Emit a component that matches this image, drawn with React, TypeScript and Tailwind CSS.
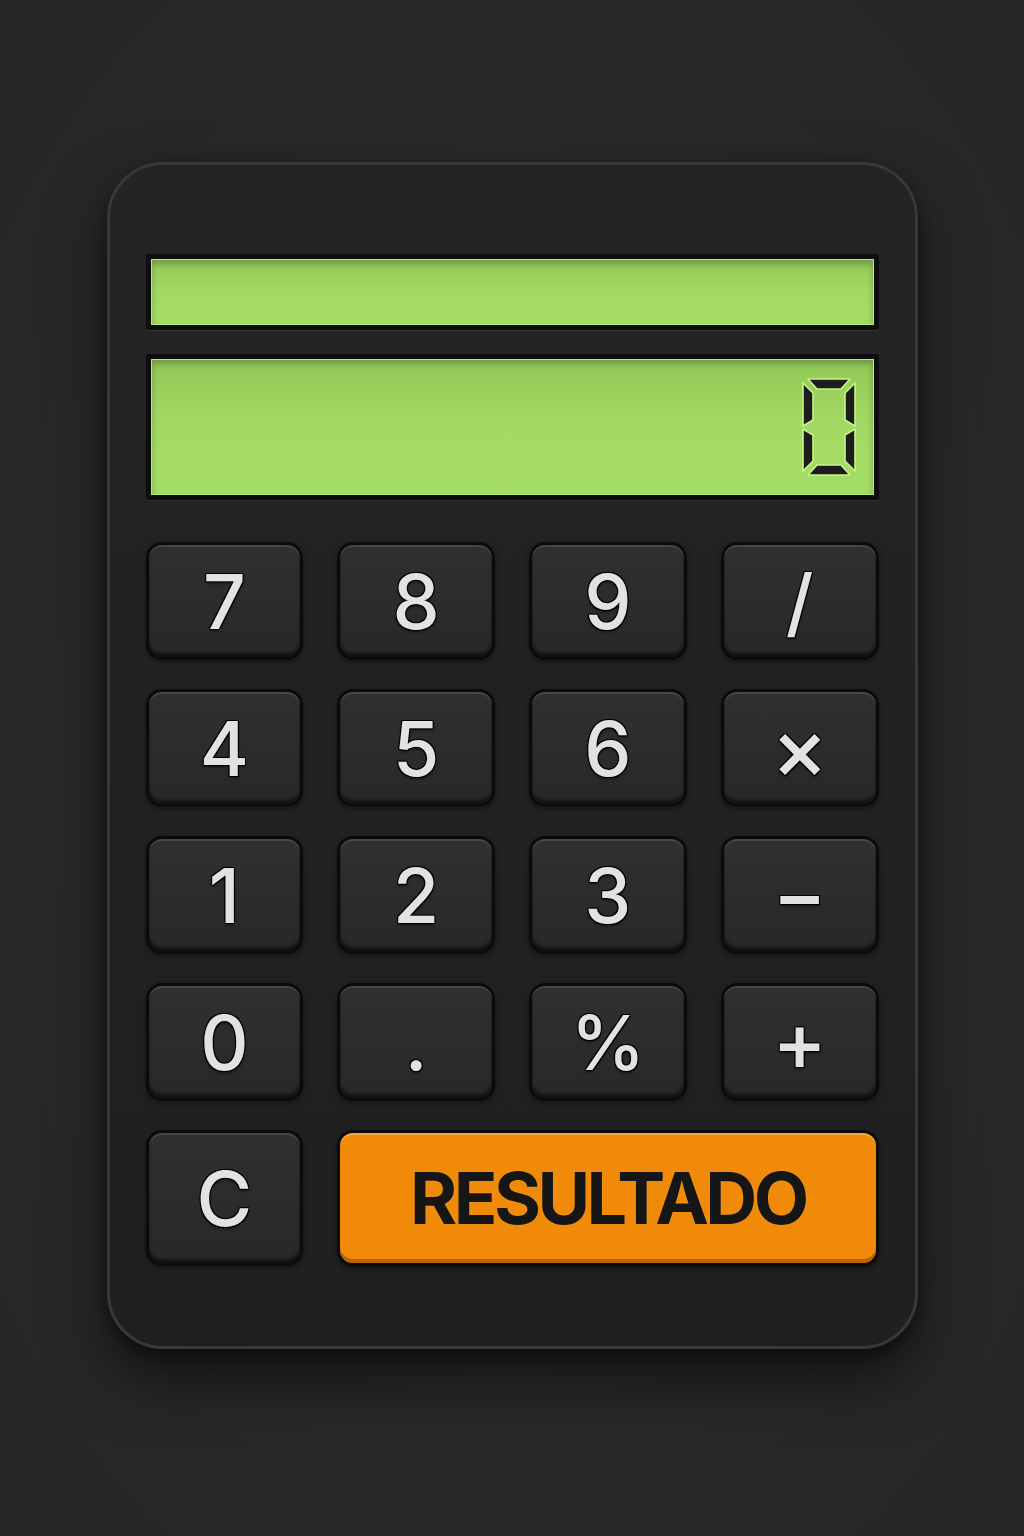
import React from "react";

const outline =
  "[text-shadow:0_0_1px_#000,1px_1px_0_#000,-1px_-1px_0_#000,1px_-1px_0_#000,-1px_1px_0_#000,0_2px_3px_rgba(0,0,0,0.6)]";

const keyFont = "font-['Inter','Liberation_Sans',Arial,sans-serif] font-medium";

function KeyShell({ h, children }: { h: string; children: React.ReactNode }) {
  return (
    <div className={`${h} rounded-[16px] bg-[#0b0b0b] p-[3px] shadow-[0_2px_4px_rgba(0,0,0,0.45),0_1px_0_rgba(255,255,255,0.04)]`}>
      <div className="flex h-full w-full items-center justify-center rounded-[13px] bg-gradient-to-b from-[#303030] to-[#282828] shadow-[inset_0_2px_0_rgba(255,255,255,0.11),inset_0_-4px_3px_rgba(0,0,0,0.55)]">
        {children}
      </div>
    </div>
  );
}

function Key({ label, extra = "" }: { label: string; extra?: string }) {
  return (
    <KeyShell h="h-[118px]">
      <span className={`${keyFont} text-[75px] leading-none text-[#e2e2e2] ${outline} ${extra}`}>{label}</span>
    </KeyShell>
  );
}

function SevenSegZero() {
  return (
    <svg width="58" height="100" viewBox="0 0 58 100" fill="#1d1d1d" stroke="#c8f585" strokeWidth="1.6" strokeLinejoin="round">
      <path d="M8 2 H50 L41 12 H17 Z" />
      <path d="M8 98 H50 L41 88 H17 Z" />
      <path d="M3 6 L13 16 V43 L3 49 Z" />
      <path d="M3 52 L13 58 V84 L3 94 Z" />
      <path d="M55 6 L45 16 V43 L55 49 Z" />
      <path d="M55 52 L45 58 V84 L55 94 Z" />
    </svg>
  );
}

function Display({ h, children }: { h: string; children?: React.ReactNode }) {
  return (
    <div className={`${h} rounded-[2px] bg-[#0e0e0e] p-[5px] shadow-[0_1px_0_rgba(255,255,255,0.08)]`}>
      <div className="flex h-full w-full items-center justify-end border border-[#b6ee74] bg-gradient-to-b from-[#93c957] via-[#a2da63] to-[#a5de66] pr-[15px] shadow-[inset_0_4px_6px_rgba(0,0,0,0.25)]">
        {children}
      </div>
    </div>
  );
}

export default function App() {
  return (
    <div className="flex min-h-[1536px] w-full justify-center bg-[radial-gradient(ellipse_at_center,#2c2c2c_0%,#292929_60%,#262626_100%)] pt-[162px]">
      <div className="h-[1187px] w-[811px] rounded-[56px] border-[3px] border-[#383838] bg-gradient-to-b from-[#242424] to-[#1f1f1f] px-[36px] pt-[89px] shadow-[0_30px_60px_rgba(0,0,0,0.55),0_6px_14px_rgba(0,0,0,0.4)]">
        <Display h="h-[76px]" />
        <div className="mt-[24px]">
          <Display h="h-[146px]">
            <SevenSegZero />
          </Display>
        </div>
        <div className="mt-[42px] grid grid-cols-4 gap-x-[34px] gap-y-[29px]">
          <Key label="7" />
          <Key label="8" />
          <Key label="9" />
          <Key label="/" />
          <Key label="4" />
          <Key label="5" />
          <Key label="6" />
          <Key label="×" extra="text-[86px]" />
          <Key label="1" />
          <Key label="2" />
          <Key label="3" />
          <Key label="−" extra="text-[82px]" />
          <Key label="0" />
          <Key label="." />
          <Key label="%" />
          <Key label="+" extra="text-[82px]" />
          <KeyShell h="h-[136px]">
            <span className={`${keyFont} text-[76px] leading-none text-[#e2e2e2] ${outline}`}>C</span>
          </KeyShell>
          <div className="col-span-3 h-[136px]">
            <div className="h-full rounded-[16px] bg-[#0b0b0b] p-[3px] shadow-[0_2px_4px_rgba(0,0,0,0.45)]">
              <div className="flex h-full w-full items-center justify-center rounded-[13px] bg-[#f08a08] shadow-[inset_0_2px_0_rgba(255,200,120,0.45),inset_0_-4px_0_#b96400]">
                <span className="font-['Inter','Liberation_Sans',Arial,sans-serif] text-[72px] font-bold leading-none tracking-[-0.05em] text-[#161616] [text-shadow:0_0_2px_#f5a030]">
                  RESULTADO
                </span>
              </div>
            </div>
          </div>
        </div>
      </div>
    </div>
  );
}
